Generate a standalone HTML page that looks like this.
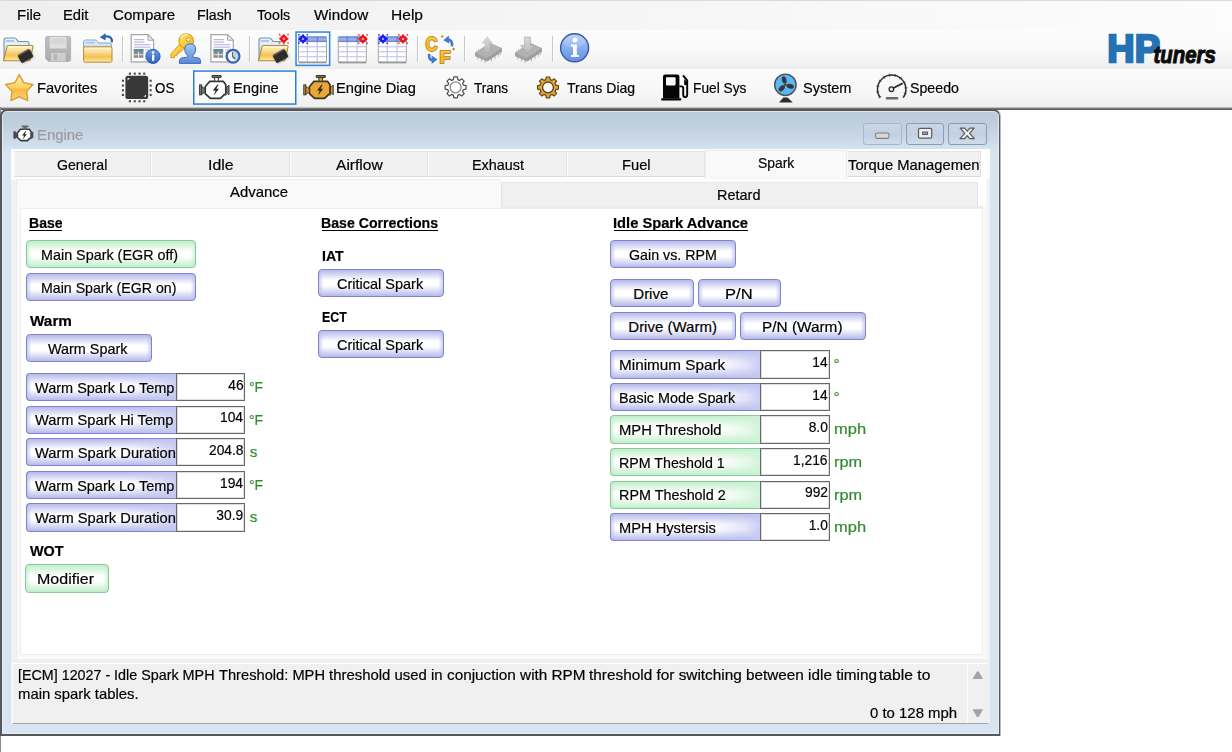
<!DOCTYPE html>
<html><head><meta charset="utf-8"><title>HP Tuners - Engine</title>
<style>
html,body{margin:0;padding:0;}
body{width:1232px;height:752px;overflow:hidden;background:#fff;position:relative;font-family:"Liberation Sans",sans-serif;font-size:15px;color:#000;}
.a{position:absolute;}
.t{position:absolute;white-space:pre;line-height:20px;height:20px;transform-origin:0 50%;-webkit-text-stroke:0.2px currentColor;}
svg{position:absolute;overflow:visible;}
#menubar{left:0;top:0;width:1232px;height:30px;background:linear-gradient(90deg,#efefef,#fcfcfc);}
#tb1{left:0;top:30px;width:1232px;height:39px;background:linear-gradient(#fcfcfc 0%,#f9f9f9 50%,#f3f3f3 82%,#eeeeee 100%);}
#tb2{left:0;top:69px;width:1232px;height:38px;background:linear-gradient(#fbfbfb 0%,#f8f8f8 50%,#f3f3f3 82%,#eeeeee 100%);}
.sep{position:absolute;top:36px;width:1px;height:26px;background:#c9c9c9;box-shadow:1px 0 0 #fff;}
.selbox{position:absolute;border:1.5px solid #3088da;box-sizing:border-box;background:#fbfcfe;}
/* window */
#win{left:0px;top:109px;width:1000px;height:627px;box-sizing:border-box;border:solid #575757;border-width:2px 1px 2px 2px;border-radius:7px 7px 0 0;box-shadow:inset 0 0 0 1px rgba(232,240,248,.75),1px 0 0 rgba(87,87,87,.4);background:linear-gradient(#bccbdb 0px,#c0cfde 14px,#cddae9 30px,#d5e2ef 38px,#d7e4f1 42px);}
#client{left:10.5px;top:148.5px;width:979.5px;height:575.5px;background:linear-gradient(#fff 0,#fff 30.5px,#f1f1f1 30.5px);}
.tab{position:absolute;top:151px;height:25.5px;background:#f1f1f1;box-sizing:border-box;border:1px solid #e3e3e3;border-left-color:#fafafa;border-bottom-color:#dadada;}
.capbtn{position:absolute;top:122.6px;height:22.2px;box-sizing:border-box;border:1px solid #8b9ab9;border-radius:3px;background:linear-gradient(#c9d6e6,#c2d0e2 50%,#cfdcea);}
/* gradient buttons */
.gb{position:absolute;box-sizing:border-box;border:1px solid #8184c8;border-radius:4px;height:28px;
 background:linear-gradient(90deg,rgba(184,188,236,.7),rgba(184,188,236,0) 4.5px,rgba(184,188,236,0) calc(100% - 4.5px),rgba(184,188,236,.7)),linear-gradient(#b6baec 0%,#ffffff 40%,#ffffff 60%,#b6baec 100%);}
.gb.g{border-color:#88ca98;
 background:linear-gradient(90deg,rgba(192,238,202,.7),rgba(192,238,202,0) 4.5px,rgba(192,238,202,0) calc(100% - 4.5px),rgba(192,238,202,.7)),linear-gradient(#bfeec9 0%,#ffffff 40%,#ffffff 60%,#bfeec9 100%);}
.gb.l{border-radius:4px 0 0 4px;border-right:none;
 background:linear-gradient(90deg,rgba(184,188,236,.7),rgba(184,188,236,0) 4.5px,rgba(196,200,240,0) calc(100% - 48px),rgba(196,200,240,.5) calc(100% - 14px),rgba(196,200,240,.9) 100%),linear-gradient(#b6baec 0%,#ffffff 40%,#ffffff 60%,#b6baec 100%);}
.gb.g.l{background:linear-gradient(90deg,rgba(192,238,202,.7),rgba(192,238,202,0) 4.5px,rgba(205,243,213,0) calc(100% - 48px),rgba(205,243,213,.5) calc(100% - 14px),rgba(205,243,213,.9) 100%),linear-gradient(#bfeec9 0%,#ffffff 40%,#ffffff 60%,#bfeec9 100%);}
.vb{position:absolute;box-sizing:border-box;border:1px solid #686868;box-shadow:inset 0 0 0 1px rgba(110,110,110,.22);background:#fff;height:28.3px;}

</style></head>
<body>
<div id="menubar" class="a"></div>
<div class="a" style="left:0;top:0;width:1232px;height:1px;background:#dadada"></div>
<div id="tb1" class="a"></div>
<div id="tb2" class="a"></div>
<div class="t" style="top:4.85px;left:17.20px;transform:scaleX(0.9978);">File</div>
<div class="t" style="top:4.85px;left:63.42px;transform:scaleX(0.9837);">Edit</div>
<div class="t" style="top:4.85px;left:112.65px;transform:scaleX(1.0066);">Compare</div>
<div class="t" style="top:4.85px;left:197.37px;transform:scaleX(0.9458);">Flash</div>
<div class="t" style="top:4.85px;left:256.72px;transform:scaleX(0.9474);">Tools</div>
<div class="t" style="top:4.85px;left:313.80px;transform:scaleX(1.0150);">Window</div>
<div class="t" style="top:4.85px;left:390.66px;transform:scaleX(1.0370);">Help</div>
<div class="sep" style="left:121.5px"></div>
<div class="sep" style="left:249.0px"></div>
<div class="sep" style="left:416.5px"></div>
<div class="sep" style="left:463.5px"></div>
<div class="sep" style="left:551.5px"></div>
<svg width="1232" height="752" viewBox="0 0 1232 752" style="left:0;top:0"><rect x="296.05" y="32.05" width="33.6" height="33.3" fill="#fdfeff" stroke="#3489db" stroke-width="1.55"/><rect x="193.75" y="71.05" width="102" height="33" fill="#fbfbfc" stroke="#2a80d8" stroke-width="1.5"/></svg>
<div class="t" style="top:77.75px;left:37.23px;transform:scaleX(0.9762);">Favorites</div>
<div class="t" style="top:77.75px;left:155.20px;transform:scaleX(0.8922);">OS</div>
<div class="t" style="top:77.75px;left:232.62px;transform:scaleX(0.9794);">Engine</div>
<div class="t" style="top:77.75px;left:335.83px;transform:scaleX(0.9764);">Engine Diag</div>
<div class="t" style="top:77.75px;left:474.33px;transform:scaleX(0.9033);">Trans</div>
<div class="t" style="top:77.75px;left:566.72px;transform:scaleX(0.9354);">Trans Diag</div>
<div class="t" style="top:77.75px;left:692.50px;transform:scaleX(0.9148);">Fuel Sys</div>
<div class="t" style="top:77.75px;left:803.35px;transform:scaleX(0.9674);">System</div>
<div class="t" style="top:77.75px;left:909.96px;transform:scaleX(0.9464);">Speedo</div>
<svg id="icons" width="1232" height="752" viewBox="0 0 1232 752" style="left:0;top:0">
<defs>
 <linearGradient id="gFold" x1="0" y1="0" x2="0" y2="1"><stop offset="0" stop-color="#fdf4d3"/><stop offset=".35" stop-color="#f9dd93"/><stop offset=".64" stop-color="#f4c252"/><stop offset=".82" stop-color="#f8d47c"/><stop offset="1" stop-color="#fce9b4"/></linearGradient>
 <linearGradient id="gBack" x1="0" y1="0" x2="0" y2="1"><stop offset="0" stop-color="#eef5fd"/><stop offset="1" stop-color="#c4d8ef"/></linearGradient>
 <linearGradient id="gHdr" x1="0" y1="0" x2="0" y2="1"><stop offset="0" stop-color="#8ea4de"/><stop offset=".5" stop-color="#9cb3ea"/><stop offset="1" stop-color="#7c94d6"/></linearGradient>
 <linearGradient id="gInfo" x1="0" y1="0" x2="0" y2="1"><stop offset="0" stop-color="#b0ccf6"/><stop offset=".5" stop-color="#86adec"/><stop offset="1" stop-color="#6690de"/></linearGradient>
 <linearGradient id="gInfoS" x1="0" y1="0" x2="0" y2="1"><stop offset="0" stop-color="#6a9ae6"/><stop offset="1" stop-color="#2c62bc"/></linearGradient>
 <linearGradient id="gStar" x1="0" y1="0" x2="0" y2="1"><stop offset="0" stop-color="#ffeeb0"/><stop offset=".48" stop-color="#fcd56a"/><stop offset=".56" stop-color="#f7bc3e"/><stop offset="1" stop-color="#fad272"/></linearGradient>
 <linearGradient id="gUser" x1="0" y1="0" x2="0" y2="1"><stop offset="0" stop-color="#a6c6f2"/><stop offset="1" stop-color="#5888d6"/></linearGradient>
 <linearGradient id="gKey" x1="0" y1="0" x2="1" y2="1"><stop offset="0" stop-color="#ffe668"/><stop offset=".6" stop-color="#fbc93a"/><stop offset="1" stop-color="#f0a822"/></linearGradient>
 <linearGradient id="gGold" x1="0" y1="0" x2="0" y2="1"><stop offset="0" stop-color="#ffdc4a"/><stop offset=".55" stop-color="#f6b422"/><stop offset="1" stop-color="#fbcc44"/></linearGradient>
 <linearGradient id="gFlop" x1="0" y1="0" x2="0" y2="1"><stop offset="0" stop-color="#bdbdbd"/><stop offset="1" stop-color="#a9a9a9"/></linearGradient>
 <linearGradient id="gArrG" x1="0" y1="0" x2="0" y2="1"><stop offset="0" stop-color="#d6d6d6"/><stop offset="1" stop-color="#b4b4b4"/></linearGradient>
 <filter id="blur1" x="-30%" y="-30%" width="160%" height="160%"><feGaussianBlur stdDeviation="0.5"/></filter>
 <filter id="blur2" x="-30%" y="-30%" width="160%" height="160%"><feGaussianBlur stdDeviation="0.9"/></filter>
 <!-- open folder with chip, origin at icon left=3 -->
 <g id="icoOpen">
  <path d="M4,60 L4,40.5 Q4,38 6.5,38 L14,38 Q15.8,38 16.8,39.6 L18,41.5 L27,41.5 Q29,41.5 29,43.5 L29,60 Z" fill="url(#gBack)" stroke="#7090b4" stroke-width="1.1"/>
  <path d="M6.3,41 L13.5,41" stroke="#9ccbf6" stroke-width="1.8" stroke-linecap="round"/>
  <path d="M3.6,60.7 L7,46.6 Q7.3,45.5 8.6,45.5 L31.8,45.5 Q33.3,45.5 33,46.8 L30.2,59.5 Q29.9,60.7 28.6,60.7 Z" fill="url(#gFold)" stroke="#b78a2e" stroke-width="1.1"/>
  <path d="M8.3,47.1 L31.2,47.1" stroke="#fffae6" stroke-width="1" opacity=".9"/>
  <g transform="translate(25.6,56.2) rotate(-30)">
   <rect x="-6.6" y="-4.4" width="13.6" height="9.4" rx="1.6" fill="#000" opacity=".35" filter="url(#blur2)"/>
   <rect x="-6.8" y="-4.8" width="13.6" height="9.2" rx="1.6" fill="#2c2c2c"/>
   <path d="M-6,-4 L6,-4" stroke="#585858" stroke-width="1"/>
  </g>
 </g>
 <!-- document base, origin at doc left 130.6 -->
 <g id="icoDoc">
  <path d="M131.2,34.6 L148,34.6 L153.6,40.2 L153.6,61.9 L131.2,61.9 Z" fill="#fdfdfd" stroke="#a6a6a6" stroke-width="1.2"/>
  <path d="M148,34.6 L148,40.2 L153.6,40.2 Z" fill="#ededed" stroke="#a4a4a4" stroke-width="1" stroke-linejoin="round"/>
  <path d="M131.6,62.6 L153.8,62.6" stroke="#c8c8c8" stroke-width="1"/>
  <g stroke="#bcbce2" stroke-width="1.2"><path d="M134,39.6 H144.4"/><path d="M134,42.1 H144.4"/><path d="M134,44.7 H150.3"/><path d="M134,47.2 H150.3"/><path d="M145.3,50 H149"/><path d="M145.3,52.4 H147.5"/></g>
  <rect x="133.8" y="49" width="9.6" height="8.8" fill="#8b8b8b"/>
  <rect x="133.8" y="49" width="9.6" height="2.6" fill="#5c8ea8"/>
  <path d="M133.8,54.7 H143.4 M138.6,51.6 V57.8" stroke="#f2f2f2" stroke-width=".9"/>
 </g>
 <!-- table icon origin x0=298.3 -->
 <g id="icoTbl">
  <rect x="298.6" y="61.6" width="28.2" height="1.8" rx=".8" fill="#000" opacity=".28" filter="url(#blur1)"/>
  <rect x="298.5" y="36.6" width="28" height="25.6" rx="1.4" fill="#fff" stroke="#a6a6a6" stroke-width="1"/>
  <g stroke="#c8cae8" stroke-width="1.3"><path d="M299.2,46.7 H326"/><path d="M299.2,51.7 H326"/><path d="M299.2,56.6 H326"/><path d="M307.4,42 V61.7"/><path d="M317.3,42 V61.7"/></g>
  <path d="M298,38 Q298,36.1 299.9,36.1 H325.1 Q327,36.1 327,38 V42 H298 Z" fill="url(#gHdr)"/>
  <path d="M298.6,37.6 H326.4" stroke="#7890d2" stroke-width="1"/><path d="M298.6,41.6 H326.4" stroke="#6a82c8" stroke-width=".8"/>
  <path d="M307.4,36.6 V41.8 M317.3,36.6 V41.8" stroke="#5c78c0" stroke-width="1"/>
  <path d="M298.8,62.2 H326.4" stroke="#929292" stroke-width="1.1"/>
 </g>
 <!-- gear badge centered at 0,0 (10x10) -->
 <g id="badge">
  <circle r="3.2"/>
  <path d="M0,-5.1 L1.9,-2.6 H-1.9 Z M0,5.1 L1.9,2.6 H-1.9 Z M-5.1,0 L-2.6,1.9 V-1.9 Z M5.1,0 L2.6,1.9 V-1.9 Z"/>
  <path d="M-5,-5 h1.5 v1.5 h-1.5 Z M3.5,-5 h1.5 v1.5 h-1.5 Z M-5,3.5 h1.5 v1.5 h-1.5 Z M3.5,3.5 h1.5 v1.5 h-1.5 Z M-3.4,-3.4 l1,0 l0,1 l-1,0 Z" opacity=".85"/>
  <circle r="1.2" fill="#fff" opacity=".62"/>
 </g>
 <!-- isometric chip (gray) origin as icon 12 -->
 <g id="icoChip">
  <g stroke="#b5b5b5" stroke-width="1.1"><path d="M477.5,56.5 V59.6 M481.5,58.4 V61.4 M485,60 V63 M491.5,58.4 V61.6 M495,56 V59.2 M498.6,53.6 V56.8 M500.5,52 V55"/></g>
  <path d="M475,52.6 L490.2,43 L502,48.2 L502,51.6 L487,61.6 L475,56.2 Z" fill="#9c9c9c"/>
  <path d="M475,52.6 L490.2,43 L502,48.2 L487,58 Z" fill="#adadad"/>
  <path d="M487,58 L502,48.2 L502,51.6 L487,61.6 Z" fill="#979797"/>
 </g>
 <!-- engine outline -->
 <g id="icoEng">
  <path d="M11.2,6.5 H24.6 L27.2,10 V19.8 L25.6,19.8 L21.8,23.6 H11.8 L6.6,18.8 V12 Z" stroke-linejoin="round" stroke-width="1.7"/>
  <rect x="1" y="10.1" width="2" height="9.9" stroke-width="1" fill="currentColor"/>
  <path d="M3.1,11.8 L6.4,13.8 L6.4,17.4 L3.1,19.4 Z" stroke-width=".8" fill="currentColor"/>
  <path d="M27.6,13 L30.4,10.2 V20 L27.6,17.2 Z" stroke-width="1" fill="currentColor" stroke-linejoin="round"/>
  <rect x="13.4" y="0.8" width="9.2" height="1.9" rx=".9" stroke-width="1.1" fill="#8a8a8a"/>
  <path d="M15.7,2.8 H20.1 L19.3,6.4 H16.5 Z" stroke-width="1"/>
  <path d="M18.9,9.8 L14.2,15.7 L16.9,15.7 L15.1,20.8 L20.4,14 L17.7,14 L19.9,9.8 Z" fill="#262626" stroke="none"/>
 </g>
 <!-- gear 8 teeth centered 0,0 -->
 <path id="gear8" d="M-1.9,-11.6 L1.9,-11.6 L2.5,-8.6 L4.4,-7.8 L6.9,-9.5 L9.5,-6.9 L7.8,-4.4 L8.6,-2.5 L11.6,-1.9 L11.6,1.9 L8.6,2.5 L7.8,4.4 L9.5,6.9 L6.9,9.5 L4.4,7.8 L2.5,8.6 L1.9,11.6 L-1.9,11.6 L-2.5,8.6 L-4.4,7.8 L-6.9,9.5 L-9.5,6.9 L-7.8,4.4 L-8.6,2.5 L-11.6,1.9 L-11.6,-1.9 L-8.6,-2.5 L-7.8,-4.4 L-9.5,-6.9 L-6.9,-9.5 L-4.4,-7.8 L-2.5,-8.6 Z"/>
</defs>

<!-- ===== toolbar 1 ===== -->
<use href="#icoOpen"/>
<!-- floppy -->
<g opacity=".95">
 <path d="M47.5,36.4 H68.8 Q70.6,36.4 70.6,38.2 V59.6 Q70.6,61.4 68.8,61.4 H48.6 L45.6,58.6 V38.2 Q45.6,36.4 47.5,36.4 Z" fill="url(#gFlop)" stroke="#a6a6a6" stroke-width=".8"/>
 <rect x="49.8" y="36.9" width="16.6" height="11.6" fill="#dedede"/>
 <rect x="51.6" y="38.5" width="13" height="5.2" fill="#d2d2d2"/>
 <rect x="51" y="53" width="14.6" height="8.2" fill="#cdcdcd"/>
 <rect x="53.6" y="54.2" width="3.6" height="6" fill="#b2b2b2"/>
</g>
<!-- closed folder with arrow -->
<path d="M83.6,48 L83.6,42 Q83.6,40 85.6,40 L95,40 Q96.4,40 97.2,41.2 L98.4,43 L110,43 Q111.6,43 111.6,44.6 L111.6,48 Z" fill="url(#gBack)" stroke="#86a2c6" stroke-width="1"/>
<path d="M86,42.6 L94.4,42.6" stroke="#9ccbf6" stroke-width="1.6" stroke-linecap="round"/>
<rect x="83.6" y="46.8" width="28.4" height="15.4" rx="1.6" fill="url(#gFold)" stroke="#b78a2e" stroke-width="1"/>
<path d="M85,48.4 H110.6" stroke="#fff6d8" stroke-width="1" opacity=".9"/>
<path d="M112,42.2 Q112.4,35.6 104.6,36.4" fill="none" stroke="#2b66ad" stroke-width="2.2"/>
<path d="M99.8,37.2 L105.6,33.2 L105.6,40.6 Z" fill="#2b66ad"/>
<!-- doc + info -->
<use href="#icoDoc"/>
<circle cx="153" cy="56.4" r="7.1" fill="url(#gInfoS)" stroke="#2d5eb8" stroke-width="1"/>
<circle cx="153.1" cy="52.6" r="1.25" fill="#fff"/><rect x="152" y="54.6" width="2.3" height="6.2" fill="#fff"/>
<!-- key + user -->
<g>
 <path d="M180.2,43.6 L170.9,54 L170.9,57.6 L174.6,57.6 L174.6,55.6 L176.8,55.6 L176.8,53.4 L179,53.4 L179,51.4 L181.2,51.4 L184.6,47.8 Z" fill="url(#gKey)" stroke="#d89a1c" stroke-width="1" stroke-linejoin="round"/>
 <circle cx="186.2" cy="41" r="7.3" fill="url(#gKey)" stroke="#d89a1c" stroke-width="1.1"/>
 <path d="M181,37.4 Q183.4,34.2 187.4,34.4" fill="none" stroke="#fff3b0" stroke-width="1.4" stroke-linecap="round" opacity=".9"/>
 <circle cx="188.2" cy="39.6" r="1.9" fill="#f6f6f6" stroke="#c88c18" stroke-width=".9"/>
 <path d="M179.4,63.4 V61 Q179.4,57.8 183.4,57.6 L186.4,57.4 Q187.8,57.2 187.5,55.6 Q184.6,53 184.7,49 Q185,43.8 190.2,43.8 Q195.4,43.8 195.7,49 Q195.8,53 192.9,55.6 Q192.6,57.2 194,57.4 L196.8,57.6 Q200.6,57.8 200.6,61 V63.4 Z" fill="url(#gUser)" stroke="#3f6cc4" stroke-width="1" stroke-linejoin="round"/>
</g>
<!-- doc + clock -->
<use href="#icoDoc" x="79.7"/>
<circle cx="233" cy="56.2" r="6.4" fill="#f0f4f9" stroke="#3f62b0" stroke-width="2.3"/>
<path d="M232.8,52 V56.6 L235.4,59" fill="none" stroke="#4a4f5c" stroke-width="1.3"/>
<path d="M233,56.2 L233,51 A5.2,5.2 0 0 1 237.4,59 Z" fill="#a9d3ec" opacity=".85"/>
<!-- open folder + red gear -->
<use href="#icoOpen" x="255"/>
<use href="#badge" x="283.8" y="38.8" fill="#f21414"/>
<!-- tables -->
<use href="#icoTbl"/>
<use href="#badge" x="303" y="38.9" fill="#1a1afa"/>
<use href="#icoTbl" x="39.8"/>
<use href="#badge" x="362.9" y="38.9" fill="#f21414"/>
<use href="#icoTbl" x="79.8"/>
<use href="#badge" x="383" y="38.9" fill="#1a1afa"/>
<use href="#badge" x="403" y="38.9" fill="#f21414"/>
<!-- C F -->
<g font-family="Liberation Sans" font-weight="bold" fill="#b87818" stroke="#b87818" stroke-width="1.9" stroke-linejoin="round">
 <text x="425.4" y="51.2" font-size="20.6" textLength="12" lengthAdjust="spacingAndGlyphs">C</text>
 <text x="439.4" y="62.9" font-size="17.2" textLength="11" lengthAdjust="spacingAndGlyphs">F</text>
</g>
<g font-family="Liberation Sans" font-weight="bold" fill="url(#gGold)" stroke="#fbc22c" stroke-width=".3">
 <text x="425.4" y="51.2" font-size="20.6" textLength="12" lengthAdjust="spacingAndGlyphs">C</text>
 <text x="439.4" y="62.9" font-size="17.2" textLength="11" lengthAdjust="spacingAndGlyphs">F</text>
</g>
<path d="M452,46.4 Q452.8,39.4 447.4,39.6" fill="none" stroke="#4078cc" stroke-width="2.6"/>
<path d="M443.4,40.2 L448.8,35.6 L449.4,43.8 Z" fill="#4078cc"/>
<path d="M429.2,53.8 Q428.6,60.4 432.6,60.2" fill="none" stroke="#4078cc" stroke-width="2.6"/>
<path d="M437.4,59.4 L431.6,55.4 L431.6,64 Z" fill="#4078cc"/>
<path d="M442.2,35 l1.5,1.5 l-1.5,1.5 l-1.5,-1.5 Z M453.6,47.5 l1.6,1.6 l-1.6,1.6 l-1.6,-1.6 Z" fill="#c8881c"/>
<!-- chips -->
<g filter="url(#blur1)" opacity=".92">
 <use href="#icoChip"/>
 <path d="M487.2,36.2 L493,43.6 L489.6,43.6 L489.6,52 L484.8,52 L484.8,43.6 L481.4,43.6 Z" fill="url(#gArrG)"/>
 <use href="#icoChip" x="40"/>
 <path d="M524.4,37 H530.6 V45.4 H534.4 L527.5,53.6 L520.6,45.4 H524.4 Z" fill="url(#gArrG)" stroke="#9c9c9c" stroke-width=".6"/>
</g>
<!-- big info -->
<circle cx="574.6" cy="47.8" r="14" fill="url(#gInfo)" stroke="#3359aa" stroke-width="1.4"/>
<ellipse cx="574.6" cy="41.4" rx="10.6" ry="6.6" fill="#fff" opacity=".16"/>
<g fill="#fff"><circle cx="575" cy="40" r="2.5"/><path d="M571,44.6 H576.8 V55 H578.8 V57 H571 V55 H573 V46.6 H571 Z"/></g>
<!-- logo -->
<g font-family="Liberation Sans" font-weight="bold" stroke-linejoin="miter">
 <text x="1107.3" y="62.2" font-size="39.4" fill="#2472b4" stroke="#2472b4" stroke-width="2.5" textLength="52.6" lengthAdjust="spacingAndGlyphs">HP</text>
 <text x="1153.4" y="62.9" font-size="23" font-style="italic" fill="#0a0a0a" stroke="#0a0a0a" stroke-width="1" textLength="62.4" lengthAdjust="spacingAndGlyphs">tuners</text>
</g>

<!-- ===== toolbar 2 ===== -->
<path d="M19.3,74.7 L23.8,82.8 L32.9,84.6 L26.6,91.4 L27.7,100.6 L19.3,96.7 L10.9,100.6 L12.0,91.4 L5.7,84.6 L14.8,82.8 Z" fill="url(#gStar)" stroke="#d9a23e" stroke-width="1.5" stroke-linejoin="round"/>
<!-- OS chip -->
<g fill="#4a4a4a">
 <rect x="125.4" y="75.8" width="22.8" height="23.2" rx="2.6" fill="#383838"/>
 <g id="pinsH"><rect x="128.9" y="72.6" width="2.1" height="2.1"/><rect x="133.7" y="72.6" width="2.1" height="2.1"/><rect x="138.5" y="72.6" width="2.1" height="2.1"/><rect x="143.2" y="72.6" width="2.1" height="2.1"/></g>
 <use href="#pinsH" y="27.6"/>
 <g id="pinsV"><rect x="121.9" y="79.7" width="2.1" height="2.1"/><rect x="121.9" y="84.5" width="2.1" height="2.1"/><rect x="121.9" y="89.2" width="2.1" height="2.1"/><rect x="121.9" y="93.9" width="2.1" height="2.1"/></g>
 <use href="#pinsV" x="27.7"/>
 <path d="M127.6,78 h2.4 l-2.4,2.4 Z M146,96.8 h-2.4 l2.4,-2.4 Z" fill="#f4f4f4"/>
</g>
<!-- Engine (outline) -->
<g transform="translate(198.6,74.8)" fill="#fff" stroke="#333" color="#7a7a7a"><use href="#icoEng"/></g>
<!-- Engine Diag (orange) -->
<g transform="translate(302.8,74.8)" fill="#e8a832" stroke="#3a3426" color="#d89a2c"><use href="#icoEng"/></g>
<!-- Trans gear -->
<g transform="translate(455.6,87.4) scale(.9)"><use href="#gear8" fill="#fff" stroke="#4c4c4c" stroke-width="1.35" stroke-linejoin="round"/><circle r="6.1" fill="#fff" stroke="#8a8a8a" stroke-width="1.5"/></g>
<g transform="translate(548,87.4) scale(.9)"><use href="#gear8" fill="#e6a62e" stroke="#5a4620" stroke-width="1.3" stroke-linejoin="round"/><circle r="6" fill="#fafafa" stroke="#4a4030" stroke-width="1.4"/></g>
<!-- Fuel -->
<g fill="#050505">
 <path d="M663,76.6 Q663,74.6 665,74.6 H677.4 Q679.4,74.6 679.4,76.6 V98.4 H663 Z"/>
 <rect x="661.2" y="98.2" width="20" height="2.4" rx=".6"/>
 <rect x="666" y="77.2" width="9.6" height="8.2" rx=".8" fill="#fafafa"/>
 <path d="M679.4,86.4 H681.6 Q683.2,86.4 683.2,88 V94.6 Q683.2,97.2 685.2,97.2 Q687.2,97.2 687.2,94.6 V80.4 L683,75.4" fill="none" stroke="#050505" stroke-width="1.9"/>
 <path d="M684.2,79 L687.6,82.4 V85 H684.2 Z"/>
</g>
<!-- Fan -->
<path d="M779,102.6 L783.4,97.4 H787.6 L792.8,102.6 Z" fill="#2e2e2e"/>
<circle cx="785.4" cy="84.8" r="10.7" fill="#5ab8f5" stroke="#4e4e4e" stroke-width="1.4"/>
<g fill="#383838" transform="translate(785.4,84.8)">
 <ellipse cx="0" cy="-5" rx="2.3" ry="3.7" transform="rotate(-14)"/>
 <ellipse cx="0" cy="-5" rx="2.3" ry="3.7" transform="rotate(106)"/>
 <ellipse cx="0" cy="-5" rx="2.3" ry="3.7" transform="rotate(226)"/>
 <circle r="1.2"/>
</g>
<!-- Speedo -->
<g fill="none" stroke="#2c2c2c">
 <path d="M880.2,97.6 A14.2,14.2 0 1 1 903.2,97.6" stroke-width="1.5"/>
 <path d="M880.2,97.6 A14.2,14.2 0 1 1 903.2,97.6" stroke-width="3.2" stroke-dasharray="1 4.7" opacity=".6"/>
 <circle cx="891.4" cy="89.2" r="2.3" stroke-width="1.3"/>
 <path d="M893.4,88 L902,83.6" stroke-width="1.8" stroke-linecap="round"/>
</g>
<rect x="885.8" y="96.9" width="12.4" height="2.7" rx=".9" fill="#6a6a6a"/>
</svg>

<div class="a" style="left:0;top:107px;width:1232px;height:3px;background:linear-gradient(#e0e0e0 0%,#989898 33%,#666 60%,#555 100%)"></div>
<div class="a" style="left:0;top:107px;width:1px;height:645px;background:#8c8c8c"></div>
<div id="win" class="a"></div>
<div id="client" class="a"></div>
<svg width="20.6" height="16.6" viewBox="0 0 31 25" style="left:12.8px;top:124.8px"><g fill="#fff" stroke="#3c3c3c" stroke-width="2.4"><path d="M11.2,6.5 H24.6 L27.2,10 V19.8 L25.6,19.8 L21.8,23.6 H11.8 L6.6,18.8 V12 Z" stroke-linejoin="round"/><path d="M0.6,9.6 H3.4 L6.6,13 V18 L3.4,20.6 H0.6 Z M30.6,9.6 L27.2,12.4 V17.6 L30.6,20.4 Z" fill="#4a4a4a" stroke="none"/><rect x="12.6" y="0.6" width="11" height="2.8" rx="1.2" fill="#666" stroke="none"/><rect x="15.6" y="2.6" width="4.8" height="4.4" fill="#666" stroke="none"/><path d="M19.2,9 L13.6,15.9 L16.8,15.9 L14.8,21.4 L20.8,13.8 L17.6,13.8 L20.2,9 Z" fill="#222" stroke="none"/></g></svg>
<div class="t" style="top:124.85px;color:#9a9aa2;left:37.01px;transform:scaleX(0.9928);">Engine</div>
<div class="capbtn" style="left:863.4px;width:38.8px;border-color:#a9b7cc"></div>
<div class="capbtn" style="left:905.6px;width:38.8px"></div>
<div class="capbtn" style="left:948.3px;width:39.2px"></div>
<svg width="1232" height="752" viewBox="0 0 1232 752" style="left:0;top:0">
<rect x="875.6" y="133" width="13.4" height="5.4" rx="1.6" fill="#d8d8d8" stroke="#7c7c7c" stroke-width="1.1"/>
<rect x="918.5" y="128.4" width="13.2" height="9.8" rx="1.2" fill="#ececec" stroke="#5c5c5c" stroke-width="1.2"/>
<rect x="922.6" y="132" width="5" height="2.6" fill="#8a98bc" stroke="#4c5470" stroke-width=".9"/>
<path d="M960.2,128.2 H964.6 L967.2,131.2 L969.8,128.2 H974.2 L969.6,133.3 L974.4,138.6 H969.8 L967.2,135.6 L964.6,138.6 H960 L964.8,133.3 Z" fill="#efefef" stroke="#5a5a5a" stroke-width="1.2" stroke-linejoin="round"/>
</svg>
<div class="a" style="left:15.7px;top:178.5px;width:972px;height:481px;background:#f9f9f9;border:1px solid #ececec;box-sizing:border-box"></div>
<div class="tab" style="left:13.5px;width:137.3px"></div>
<div class="tab" style="left:150.8px;width:138.8px"></div>
<div class="tab" style="left:289.6px;width:138.79999999999995px"></div>
<div class="tab" style="left:428.4px;width:138.80000000000007px"></div>
<div class="tab" style="left:567.2px;width:137.5px"></div>
<div class="a" style="left:704.7px;top:149.6px;width:142.29999999999995px;height:30.4px;background:#f9f9f9;border:1px solid #ececec;border-bottom:none;box-sizing:border-box"></div>
<div class="tab" style="left:847px;width:134px"></div>
<div class="t" style="top:154.75px;left:56.89px;transform:scaleX(0.9424);">General</div>
<div class="t" style="top:154.75px;left:207.87px;transform:scaleX(1.0586);">Idle</div>
<div class="t" style="top:154.75px;left:336.00px;transform:scaleX(1.0383);">Airflow</div>
<div class="t" style="top:154.75px;left:472.25px;transform:scaleX(0.9594);">Exhaust</div>
<div class="t" style="top:154.75px;left:622.33px;transform:scaleX(0.9788);">Fuel</div>
<div class="t" style="top:152.65px;left:757.67px;transform:scaleX(0.9261);">Spark</div>
<div class="a" style="left:848px;top:151px;width:132.4px;height:25px;overflow:hidden"><div class="t" style="top:3.75px;left:0.40px;transform:scaleX(0.9850);">Torque Management</div></div>
<div class="a" style="left:500.6px;top:181.6px;width:477.2px;height:25px;background:#f0f0f0;border:1px solid #e2e2e2;border-top-color:#e8e8e8;box-sizing:border-box"></div>
<div class="a" style="left:500.6px;top:179.4px;width:486px;height:2.2px;background:#fdfdfd"></div>
<div class="t" style="top:182.35px;left:229.60px;transform:scaleX(0.9922);">Advance</div>
<div class="t" style="top:185.15px;left:717.34px;transform:scaleX(0.9650);">Retard</div>
<div class="a" style="left:977.8px;top:179.4px;width:8.6px;height:26.8px;background:#fff"></div>
<div class="a" style="left:986.6px;top:179px;width:3.4px;height:484px;background:#f2f2f2"></div>
<div class="a" style="left:500.6px;top:206px;width:482.4px;height:2px;background:#ebebeb"></div>
<div class="a" style="left:19.8px;top:207.9px;width:963.2px;height:447.2px;background:#fff;border:1px solid #eeeeee;border-right-width:1.6px;box-sizing:border-box"></div>
<div class="a" style="left:10.5px;top:659px;width:979.5px;height:4px;background:#f0f0f0"></div>
<div class="a" style="left:12.2px;top:663px;width:976.4px;height:61px;background:#f0f0f0;box-sizing:border-box;border-top:1px solid #fdfdfd;border-left:1px solid #fdfdfd;border-bottom:1px solid #a8a8a8;border-right:1px solid #c8c8c8"></div>
<div class="a" style="left:966.6px;top:664px;width:21px;height:59px;background:#f0f0f0;border-left:1px solid #fbfbfb"></div>
<svg width="1232" height="752" viewBox="0 0 1232 752" style="left:0;top:0"><path d="M972.6,679 L976.9,671.4 L978.7,671.4 L983,679 Z M972.6,709.3 L976.9,716.9 L978.7,716.9 L983,709.3 Z" fill="#a3a3a3"/></svg>
<div class="t" style="top:664.65px;left:17.80px;transform:scaleX(0.9534);">[ECM] 12027 -</div>
<div class="t" style="top:664.65px;left:113.91px;transform:scaleX(0.9568);">Idle Spark MPH</div>
<div class="t" style="top:664.65px;left:219.11px;transform:scaleX(0.9780);">Threshold: MPH</div>
<div class="t" style="top:664.65px;left:328.88px;transform:scaleX(0.9947);">threshold used in</div>
<div class="t" style="top:664.65px;left:446.69px;transform:scaleX(1.0194);">conjuction with RPM</div>
<div class="t" style="top:664.65px;left:589.27px;transform:scaleX(1.0241);">threshold for switching</div>
<div class="t" style="top:664.65px;left:745.68px;transform:scaleX(1.0197);">between idle timing</div>
<div class="t" style="top:664.65px;left:879.07px;transform:scaleX(1.0439);">table to</div>
<div class="t s2" style="top:683.55px;left:17.73px;transform:scaleX(0.9908);">main spark tables.</div>
<div class="t" style="top:702.75px;left:869.88px;transform:scaleX(0.9954);">0 to 128 mph</div>
<div class="t" style="top:213.35px;font-weight:bold;left:28.69px;transform:scaleX(0.9354);">Base</div>
<div class="a" style="left:29.0px;top:230.1px;width:33.199999999999996px;height:1.2px;background:#000"></div>
<div class="gb g" style="left:25.5px;top:240.4px;width:170px;height:28px"></div>
<div class="t" style="top:245.15px;left:41.15px;transform:scaleX(0.9574);">Main Spark (EGR off)</div>
<div class="gb" style="left:25.5px;top:273.2px;width:170px;height:28px"></div>
<div class="t" style="top:277.95px;left:41.17px;transform:scaleX(0.9441);">Main Spark (EGR on)</div>
<div class="t" style="top:311.25px;font-weight:bold;left:30.00px;transform:scaleX(1.0199);">Warm</div>
<div class="gb" style="left:25.5px;top:334.2px;width:126px;height:28px"></div>
<div class="t" style="top:338.95px;left:48.30px;transform:scaleX(0.9593);">Warm Spark</div>
<div class="gb l" style="left:25.5px;top:372.9px;width:150.2px;height:28.3px"></div>
<div class="t" style="top:377.75px;left:34.50px;transform:scaleX(0.9664);">Warm Spark Lo Temp</div>
<div class="vb" style="left:175.7px;top:372.9px;width:69.5px"></div>
<div class="t" style="top:374.85px;right:988.82px;transform-origin:100% 50%;transform:scaleX(0.9200);">46</div>
<div class="t" style="top:376.95px;color:#2e8b2e;left:249.23px;transform:scaleX(0.9275);">°F</div>
<div class="gb l" style="left:25.5px;top:405.5px;width:150.2px;height:28.3px"></div>
<div class="t" style="top:410.35px;left:34.50px;transform:scaleX(0.9768);">Warm Spark Hi Temp</div>
<div class="vb" style="left:175.7px;top:405.5px;width:69.5px"></div>
<div class="t" style="top:407.45px;right:989.01px;transform-origin:100% 50%;transform:scaleX(0.9200);">104</div>
<div class="t" style="top:409.55px;color:#2e8b2e;left:249.23px;transform:scaleX(0.9275);">°F</div>
<div class="gb l" style="left:25.5px;top:438.09999999999997px;width:150.2px;height:28.3px"></div>
<div class="t" style="top:442.95px;left:34.50px;transform:scaleX(0.9809);">Warm Spark Duration</div>
<div class="vb" style="left:175.7px;top:438.09999999999997px;width:69.5px"></div>
<div class="t" style="top:440.05px;right:988.81px;transform-origin:100% 50%;transform:scaleX(0.9200);">204.8</div>
<div class="t" style="top:442.15px;color:#2e8b2e;left:249.83px;">s</div>
<div class="gb l" style="left:25.5px;top:470.7px;width:150.2px;height:28.3px"></div>
<div class="t" style="top:475.55px;left:34.50px;transform:scaleX(0.9664);">Warm Spark Lo Temp</div>
<div class="vb" style="left:175.7px;top:470.7px;width:69.5px"></div>
<div class="t" style="top:472.65px;right:989.01px;transform-origin:100% 50%;transform:scaleX(0.9200);">194</div>
<div class="t" style="top:474.75px;color:#2e8b2e;left:249.23px;transform:scaleX(0.9275);">°F</div>
<div class="gb l" style="left:25.5px;top:503.3px;width:150.2px;height:28.3px"></div>
<div class="t" style="top:508.15px;left:34.50px;transform:scaleX(0.9809);">Warm Spark Duration</div>
<div class="vb" style="left:175.7px;top:503.3px;width:69.5px"></div>
<div class="t" style="top:505.25px;right:988.76px;transform-origin:100% 50%;transform:scaleX(0.9200);">30.9</div>
<div class="t" style="top:507.35px;color:#2e8b2e;left:249.83px;">s</div>
<div class="t" style="top:541.45px;font-weight:bold;left:29.70px;transform:scaleX(0.9606);">WOT</div>
<div class="gb g" style="left:25.3px;top:564.2px;width:83.7px;height:28.4px"></div>
<div class="t" style="top:568.95px;left:37.12px;transform:scaleX(1.0678);">Modifier</div>
<div class="t" style="top:213.35px;font-weight:bold;left:321.28px;transform:scaleX(0.9430);">Base Corrections</div>
<div class="a" style="left:321.59999999999997px;top:230.1px;width:116.69999999999999px;height:1.2px;background:#000"></div>
<div class="t" style="top:245.95px;font-weight:bold;left:321.79px;transform:scaleX(0.9374);">IAT</div>
<div class="gb" style="left:318.1px;top:269.3px;width:125.8px;height:28px"></div>
<div class="t" style="top:274.05px;left:336.58px;transform:scaleX(0.9661);">Critical Spark</div>
<div class="t" style="top:307.45px;font-weight:bold;left:321.90px;transform:scaleX(0.8221);">ECT</div>
<div class="gb" style="left:318.1px;top:330.4px;width:125.8px;height:28px"></div>
<div class="t" style="top:335.15px;left:336.58px;transform:scaleX(0.9661);">Critical Spark</div>
<div class="t" style="top:213.35px;font-weight:bold;left:613.15px;transform:scaleX(0.9793);">Idle Spark Advance</div>
<div class="a" style="left:613.5px;top:230.1px;width:134.60000000000002px;height:1.2px;background:#000"></div>
<div class="gb" style="left:610.2px;top:240.4px;width:126.2px;height:28px"></div>
<div class="t" style="top:245.15px;left:628.79px;transform:scaleX(0.9492);">Gain vs. RPM</div>
<div class="gb" style="left:610.2px;top:279.3px;width:83.4px;height:28px"></div>
<div class="t" style="top:284.05px;left:633.30px;">Drive</div>
<div class="gb" style="left:697.7px;top:279.3px;width:83.7px;height:28px"></div>
<div class="t" style="top:284.05px;left:724.78px;transform:scaleX(1.1038);">P/N</div>
<div class="gb" style="left:610.2px;top:311.8px;width:126.2px;height:28px"></div>
<div class="t" style="top:316.55px;left:628.30px;">Drive (Warm)</div>
<div class="gb" style="left:740.2px;top:311.8px;width:126.2px;height:28px"></div>
<div class="t" style="top:316.55px;left:762.37px;transform:scaleX(1.0248);">P/N (Warm)</div>
<div class="gb l" style="left:610.2px;top:350.3px;width:150px;height:28.3px"></div>
<div class="t" style="top:355.15px;left:618.78px;transform:scaleX(1.0189);">Minimum Spark</div>
<div class="vb" style="left:760.2px;top:350.3px;width:69.8px"></div>
<div class="t" style="top:352.25px;right:404.22px;transform-origin:100% 50%;transform:scaleX(0.9200);">14</div>
<div class="t" style="top:354.35px;color:#2e8b2e;left:833.57px;">°</div>
<div class="gb l" style="left:610.2px;top:382.85px;width:150px;height:28.3px"></div>
<div class="t" style="top:387.70px;left:618.85px;transform:scaleX(0.9552);">Basic Mode Spark</div>
<div class="vb" style="left:760.2px;top:382.85px;width:69.8px"></div>
<div class="t" style="top:384.80px;right:404.22px;transform-origin:100% 50%;transform:scaleX(0.9200);">14</div>
<div class="t" style="top:386.90px;color:#2e8b2e;left:833.57px;">°</div>
<div class="gb g l" style="left:610.2px;top:415.40000000000003px;width:150px;height:28.3px"></div>
<div class="t" style="top:420.25px;left:618.82px;transform:scaleX(0.9867);">MPH Threshold</div>
<div class="vb" style="left:760.2px;top:415.40000000000003px;width:69.8px"></div>
<div class="t" style="top:417.35px;right:404.11px;transform-origin:100% 50%;transform:scaleX(0.9200);">8.0</div>
<div class="t" style="top:419.45px;color:#2e8b2e;left:833.53px;transform:scaleX(1.0989);">mph</div>
<div class="gb g l" style="left:610.2px;top:447.95px;width:150px;height:28.3px"></div>
<div class="t" style="top:452.80px;left:618.86px;transform:scaleX(0.9491);">RPM Theshold 1</div>
<div class="vb" style="left:760.2px;top:447.95px;width:69.8px"></div>
<div class="t" style="top:449.90px;right:404.01px;transform-origin:100% 50%;transform:scaleX(0.9200);">1,216</div>
<div class="t" style="top:452.00px;color:#2e8b2e;left:833.54px;transform:scaleX(1.0867);">rpm</div>
<div class="gb g l" style="left:610.2px;top:480.5px;width:150px;height:28.3px"></div>
<div class="t" style="top:485.35px;left:618.85px;transform:scaleX(0.9582);">RPM Theshold 2</div>
<div class="vb" style="left:760.2px;top:480.5px;width:69.8px"></div>
<div class="t" style="top:482.45px;right:403.93px;transform-origin:100% 50%;transform:scaleX(0.9200);">992</div>
<div class="t" style="top:484.55px;color:#2e8b2e;left:833.54px;transform:scaleX(1.0867);">rpm</div>
<div class="gb l" style="left:610.2px;top:513.0500000000001px;width:150px;height:28.3px"></div>
<div class="t" style="top:517.90px;left:618.83px;transform:scaleX(0.9772);">MPH Hystersis</div>
<div class="vb" style="left:760.2px;top:513.0500000000001px;width:69.8px"></div>
<div class="t" style="top:515.00px;right:404.11px;transform-origin:100% 50%;transform:scaleX(0.9200);">1.0</div>
<div class="t" style="top:517.10px;color:#2e8b2e;left:833.53px;transform:scaleX(1.0989);">mph</div>
</body></html>
